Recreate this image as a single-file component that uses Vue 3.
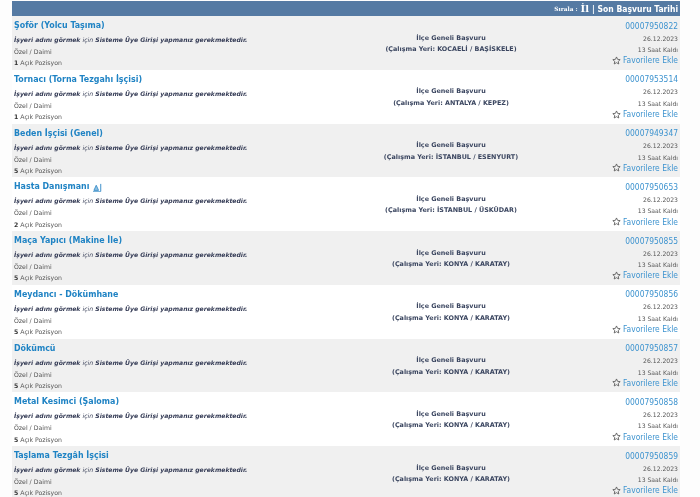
<script setup>
const notice = 'Sisteme Üye Girişi yapmanız gerekmektedir.'
const rows = [
  { title: 'Şoför (Yolcu Taşıma)', count: 1, place: 'KOCAELİ / BAŞİSKELE', no: '00007950822' },
  { title: 'Tornacı (Torna Tezgahı İşçisi)', count: 1, place: 'ANTALYA / KEPEZ', no: '00007953514' },
  { title: 'Beden İşçisi (Genel)', count: 5, place: 'İSTANBUL / ESENYURT', no: '00007949347' },
  { title: 'Hasta Danışmanı', count: 2, place: 'İSTANBUL / ÜSKÜDAR', no: '00007950653', icon: true },
  { title: 'Maça Yapıcı (Makine İle)', count: 5, place: 'KONYA / KARATAY', no: '00007950855' },
  { title: 'Meydancı - Dökümhane', count: 5, place: 'KONYA / KARATAY', no: '00007950856' },
  { title: 'Dökümcü', count: 5, place: 'KONYA / KARATAY', no: '00007950857' },
  { title: 'Metal Kesimci (Şaloma)', count: 5, place: 'KONYA / KARATAY', no: '00007950858' },
  { title: 'Taşlama Tezgâh İşçisi', count: 5, place: 'KONYA / KARATAY', no: '00007950859' }
]
</script>

<template>
  <div class="page">
    <div class="list">
      <div class="head">
        <span class="sort-label">Sırala :</span>
        <span class="sort-il">İl</span>
        <span class="sort-rest">| Son Başvuru Tarihi</span>
      </div>
      <div v-for="r in rows" :key="r.no" class="row">
        <div class="left">
          <div class="title">
            <a>{{ r.title }}</a>
            <svg v-if="r.icon" class="access" width="9" height="9" viewBox="0 0 10 10">
              <path d="M1 8.2 L3.6 2.5 L6.2 8.2 Z" fill="#8fc1e3" stroke="#2b86c5" stroke-width="0.9" />
              <path d="M8.6 1 V9" stroke="#2b86c5" stroke-width="1" />
              <path d="M0 9.6 H9" stroke="#2b86c5" stroke-width="0.8" />
            </svg>
          </div>
          <div class="notice">İşyeri adını görmek <span class="icin">için</span> {{ notice }}</div>
          <div class="type">Özel / Daimi</div>
          <div class="type"><b>{{ r.count }}</b> Açık Pozisyon</div>
        </div>
        <div class="mid">
          <div>İlçe Geneli Başvuru</div>
          <div>(Çalışma Yeri: {{ r.place }})</div>
        </div>
        <div class="right">
          <a class="no">{{ r.no }}</a>
          <div class="small">26.12.2023</div>
          <div class="small">13 Saat Kaldı</div>
          <a class="fav">
            <svg width="9" height="9" viewBox="0 0 24 24">
              <path d="M12 2.5 L14.9 8.9 L21.8 9.7 L16.7 14.4 L18.1 21.3 L12 17.8 L5.9 21.3 L7.3 14.4 L2.2 9.7 L9.1 8.9 Z" fill="none" stroke="#555" stroke-width="2.2" />
            </svg>
            Favorilere Ekle
          </a>
        </div>
      </div>
    </div>
  </div>
</template>

<style>
html, body { margin: 0; background: #fdfdfd; }
</style>

<style scoped>
.page {
  width: 700px;
  height: 497px;
  overflow: hidden;
  padding: 1px 20px 0 12px;
  box-sizing: border-box;
  font-family: "DejaVu Sans", Verdana, sans-serif;
  filter: blur(0.3px);
}
.head {
  height: 15px;
  background: #557aa3;
  color: #fff;
  display: flex;
  align-items: center;
  justify-content: flex-end;
  gap: 3px;
  padding-right: 2px;
  font-weight: bold;
}
.sort-label { font-size: 5.8px; font-family: "DejaVu Serif", serif; }
.sort-il { font-size: 10px; font-family: "DejaVu Serif", serif; }
.sort-rest { font-size: 8.5px; font-stretch: condensed; }
.row {
  height: 53.75px;
  display: grid;
  grid-template-columns: 300px 278px 90px;
  box-sizing: border-box;
}
.row:nth-child(even) { background: #f0f0f0; }
.row:nth-child(odd) { background: #fff; }
.left { padding: 3px 0 0 2px; }
.title {
  height: 13px;
  line-height: 13px;
  font-size: 8.8px;
  font-stretch: condensed;
  font-weight: bold;
  color: #1f83c4;
  white-space: nowrap;
  display: flex;
  align-items: center;
  gap: 4px;
}
.access { margin-top: 2px; }
.notice {
  margin-top: 1px;
  height: 13px;
  line-height: 13px;
  font-size: 6.1px;
  font-weight: bold;
  font-style: italic;
  color: #343b55;
  white-space: nowrap;
}
.icin { font-weight: normal; }
.type {
  height: 11.3px;
  line-height: 11.3px;
  font-size: 6.2px;
  color: #555;
  white-space: nowrap;
}
.type b { color: #333; }
.mid {
  padding-top: 16.7px;
  text-align: center;
  font-size: 6.4px;
  font-weight: bold;
  color: #3b4660;
  line-height: 11.5px;
  white-space: nowrap;
}
.right {
  padding: 3.5px 2px 0 0;
  text-align: right;
  white-space: nowrap;
}
.no {
  display: block;
  height: 13px;
  line-height: 13px;
  font-size: 8.4px;
  font-stretch: condensed;
  color: #3d93cf;
}
.small {
  height: 11.5px;
  line-height: 11.5px;
  font-size: 6.1px;
  color: #555;
}
.fav {
  display: flex;
  justify-content: flex-end;
  align-items: center;
  gap: 2px;
  height: 11px;
  margin-top: -0.7px;
  font-size: 8.4px;
  font-stretch: condensed;
  color: #3d93cf;
}
</style>
